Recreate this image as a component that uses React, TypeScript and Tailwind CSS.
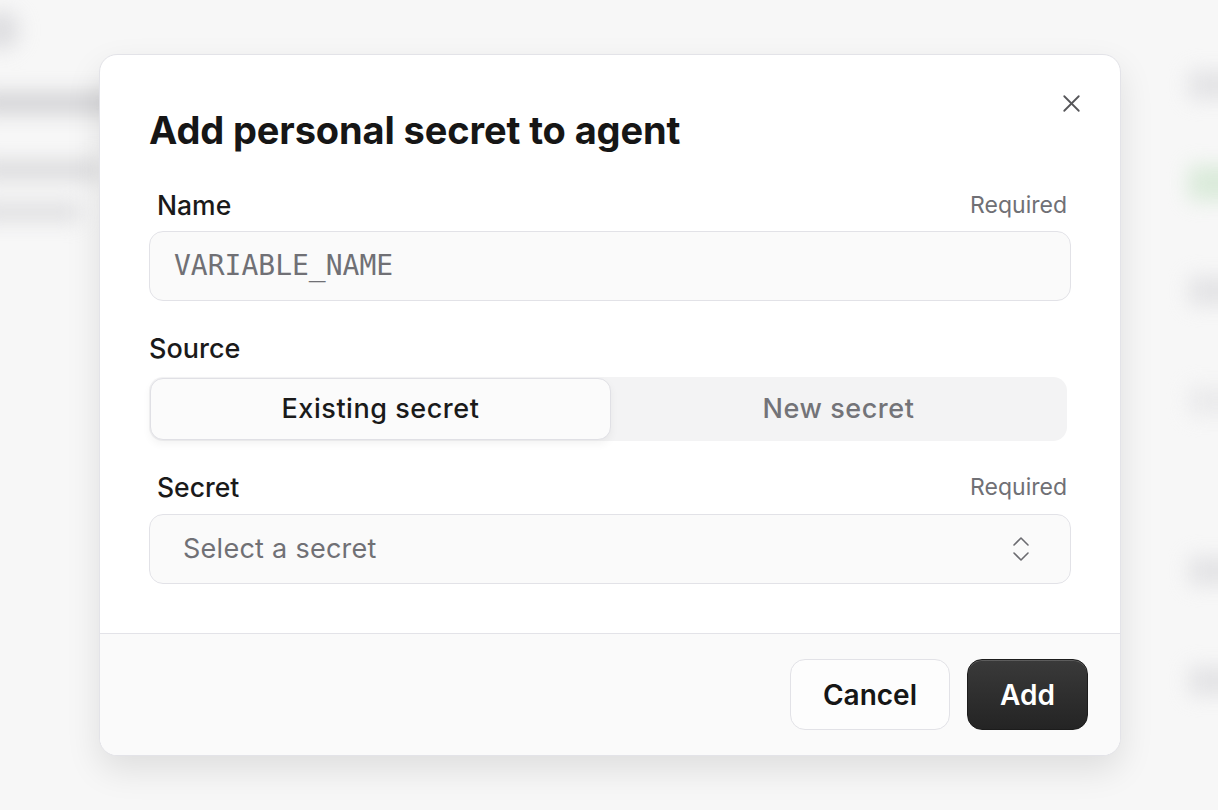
import { X } from "lucide-react";

const font = { fontFamily: "Inter, 'Noto Sans', sans-serif" };

function Backdrop() {
  // the page behind the modal, blurred out
  return (
    <div className="absolute inset-0 flex justify-between blur-[10px] opacity-70">
      <div className="flex w-[130px] flex-col pt-[10px] -ml-[20px]">
        <div className="h-[40px] w-[40px] rounded-full bg-[#d4d4d8]" />
        <div className="mt-[42px] h-[22px] w-[140px] rounded bg-[#c4c4c8]" />
        <div className="mt-[46px] h-[20px] w-[120px] rounded bg-[#cfcfd2]" />
        <div className="mt-[22px] h-[20px] w-[100px] rounded bg-[#d6d6d9]" />
      </div>
      <div className="flex w-[60px] flex-col pt-[70px] -mr-[30px]">
        <div className="h-[30px] rounded bg-[#dcdcdf]" />
        <div className="mt-[65px] h-[36px] rounded bg-[#cfe6cf]" />
        <div className="mt-[75px] h-[30px] rounded bg-[#dcdcdf]" />
        <div className="mt-[80px] h-[30px] rounded bg-[#e6e6e8]" />
        <div className="mt-[140px] h-[30px] rounded bg-[#dcdcdf]" />
        <div className="mt-[80px] h-[30px] rounded bg-[#dcdcdf]" />
      </div>
    </div>
  );
}

function UpDown() {
  return (
    <svg width="20" height="30" viewBox="0 0 20 30" fill="none" stroke="#6b6b70" strokeWidth="1.6" strokeLinecap="round" strokeLinejoin="round">
      <path d="M3 11 10 4 17 11" />
      <path d="M3 19 10 26 17 19" />
    </svg>
  );
}

function FieldLabel({ label, required }: { label: string; required?: boolean }) {
  return (
    <div className="flex items-center justify-between pl-[8px] pr-[4px]">
      <span className="text-[26.5px] font-medium leading-[34px] text-[#1a1a1a]">{label}</span>
      {required && <span className="text-[23px] leading-[34px] text-[#707075]">Required</span>}
    </div>
  );
}

export default function App() {
  return (
    <div className="relative h-[810px] w-[1218px] overflow-hidden bg-[#f7f7f7]" style={font}>
      <Backdrop />

      <div className="absolute inset-0 pl-[99px] pt-[54px]">
        <div className="relative w-[1022px] overflow-hidden rounded-[18px] border border-[#e3e3e8] bg-white shadow-[0_14px_34px_rgba(0,0,0,0.1)]">
          <button className="absolute right-[34px] top-[34px] text-[#555558]">
            <X size={29} strokeWidth={1.5} />
          </button>

          <div className="flex flex-col px-[49px] pt-[53px] pb-[49px]">
            <h2 className="text-[38px] font-bold leading-[44px] tracking-[-0.003em] text-[#161616]">
              Add personal secret to agent
            </h2>

            <div className="mt-[36px]">
              <FieldLabel label="Name" required />
            </div>
            <div className="mt-[9px] flex h-[70px] items-center rounded-[14px] border border-[#e2e2e7] bg-[#fafafa] px-[24px]">
              <span className="text-[28px] text-[#707075]" style={{ fontFamily: "'DejaVu Sans Mono', monospace" }}>
                VARIABLE_NAME
              </span>
            </div>

            <div className="mt-[31px] text-[27px] font-medium leading-[34px] text-[#1a1a1a]">Source</div>
            <div className="mt-[11px] mr-[4px] grid h-[64px] grid-cols-[461px_1fr] rounded-[14px] bg-[#f3f3f4] p-[1px]">
              <div className="flex items-center justify-center rounded-[13px] border border-[#e0e0e5] bg-[#fbfbfb] text-[27px] font-medium tracking-[0.02em] text-[#1a1a1a] shadow-[0_4px_8px_rgba(0,0,0,0.05)]">
                Existing secret
              </div>
              <div className="flex items-center justify-center text-[27px] font-medium tracking-[0.02em] text-[#737378]">
                New secret
              </div>
            </div>

            <div className="mt-[29px]">
              <FieldLabel label="Secret" required />
            </div>
            <div className="mt-[10px] flex h-[70px] items-center justify-between rounded-[14px] border border-[#e2e2e7] bg-[#fafafa] pl-[33px] pr-[39px]">
              <span className="text-[27px] tracking-[0.01em] text-[#707075]">Select a secret</span>
              <UpDown />
            </div>
          </div>

          <div className="flex justify-end gap-[17px] border-t border-[#e3e3e8] bg-[#fafafa] px-[32px] py-[25px]">
            <button className="h-[71px] w-[160px] rounded-[15px] border border-[#e2e2e7] bg-[#fdfdfd] text-[28px] font-semibold text-[#161616]">
              Cancel
            </button>
            <button className="h-[71px] w-[121px] rounded-[15px] border border-[#1c1c1c] bg-gradient-to-b from-[#3a3a3a] to-[#242424] text-[28px] font-semibold text-white shadow-[inset_0_1px_0_rgba(255,255,255,0.18)]">
              Add
            </button>
          </div>
        </div>
      </div>
    </div>
  );
}
